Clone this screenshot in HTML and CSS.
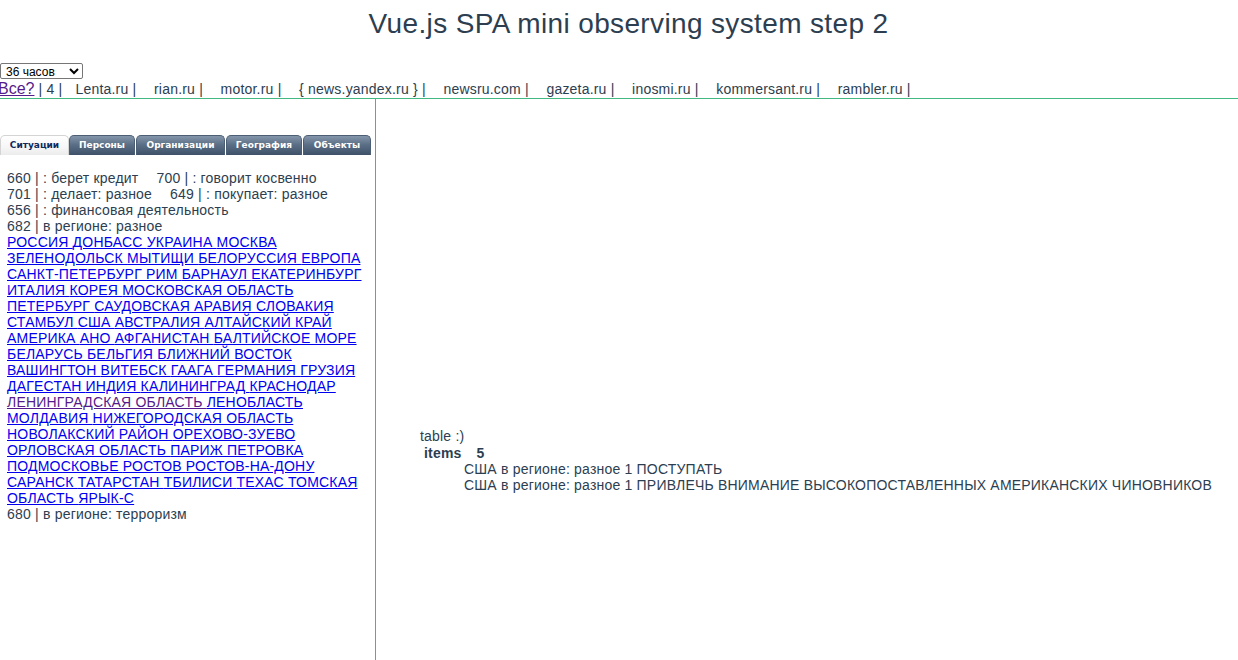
FILE: index.html
```html
<!DOCTYPE html>
<html lang="ru">
<head>
<meta charset="utf-8">
<title>Vue.js SPA mini observing system step 2</title>
<link rel="stylesheet" href="styles.css">
</head>
<body>
<div id="app">
  <h1 class="title">Vue.js SPA mini observing system step 2</h1>
  <div class="period">
    <select class="period-select">
      <option>36 часов</option>
    </select>
  </div>
  <div class="sources">
    <a class="all-link" href="#">Все?</a> | 4 |
    <span class="src">Lenta.ru |</span>
    <span class="src">rian.ru |</span>
    <span class="src">motor.ru |</span>
    <span class="src">{ news.yandex.ru } |</span>
    <span class="src">newsru.com |</span>
    <span class="src">gazeta.ru |</span>
    <span class="src">inosmi.ru |</span>
    <span class="src">kommersant.ru |</span>
    <span class="src">rambler.ru |</span>
  </div>
  <div class="main">
    <div class="side">
      <div class="tabs">
        <div class="tab active">Ситуации</div>
        <div class="tab">Персоны</div>
        <div class="tab">Организации</div>
        <div class="tab">География</div>
        <div class="tab">Объекты</div>
      </div>
      <div class="sits">
        <div class="line"><span class="sit">660 | : берет кредит</span><span class="sit">700 | : говорит косвенно</span></div>
        <div class="line"><span class="sit">701 | : делает: разное</span><span class="sit">649 | : покупает: разное</span></div>
        <div class="line"><span class="sit">656 | : финансовая деятельность</span></div>
        <div class="line"><span class="sit">682 | в регионе: разное</span></div>
        <div class="places"><a href="#">РОССИЯ </a><a href="#">ДОНБАСС </a><a href="#">УКРАИНА </a><a href="#">МОСКВА </a><a href="#">ЗЕЛЕНОДОЛЬСК </a><a href="#">МЫТИЩИ </a><a href="#">БЕЛОРУССИЯ </a><a href="#">ЕВРОПА </a><a href="#">САНКТ-ПЕТЕРБУРГ </a><a href="#">РИМ </a><a href="#">БАРНАУЛ </a><a href="#">ЕКАТЕРИНБУРГ </a><a href="#">ИТАЛИЯ </a><a href="#">КОРЕЯ </a><a href="#">МОСКОВСКАЯ ОБЛАСТЬ </a><a href="#">ПЕТЕРБУРГ </a><a href="#">САУДОВСКАЯ АРАВИЯ </a><a href="#">СЛОВАКИЯ </a><a href="#">СТАМБУЛ </a><a href="#">США </a><a href="#">АВСТРАЛИЯ </a><a href="#">АЛТАЙСКИЙ КРАЙ </a><a href="#">АМЕРИКА </a><a href="#">АНО </a><a href="#">АФГАНИСТАН </a><a href="#">БАЛТИЙСКОЕ МОРЕ </a><a href="#">БЕЛАРУСЬ </a><a href="#">БЕЛЬГИЯ </a><a href="#">БЛИЖНИЙ ВОСТОК </a><a href="#">ВАШИНГТОН </a><a href="#">ВИТЕБСК </a><a href="#">ГААГА </a><a href="#">ГЕРМАНИЯ </a><a href="#">ГРУЗИЯ </a><a href="#">ДАГЕСТАН </a><a href="#">ИНДИЯ </a><a href="#">КАЛИНИНГРАД </a><a href="#">КРАСНОДАР </a><a class="visited" href="#">ЛЕНИНГРАДСКАЯ ОБЛАСТЬ </a><a href="#">ЛЕНОБЛАСТЬ </a><a href="#">МОЛДАВИЯ </a><a href="#">НИЖЕГОРОДСКАЯ ОБЛАСТЬ </a><a href="#">НОВОЛАКСКИЙ РАЙОН </a><a href="#">ОРЕХОВО-ЗУЕВО </a><a href="#">ОРЛОВСКАЯ ОБЛАСТЬ </a><a href="#">ПАРИЖ </a><a href="#">ПЕТРОВКА </a><a href="#">ПОДМОСКОВЬЕ </a><a href="#">РОСТОВ </a><a href="#">РОСТОВ-НА-ДОНУ </a><a href="#">САРАНСК </a><a href="#">ТАТАРСТАН </a><a href="#">ТБИЛИСИ </a><a href="#">ТЕХАС </a><a href="#">ТОМСКАЯ ОБЛАСТЬ </a><a href="#">ЯРЫК-С</a></div>
        <div class="line"><span class="sit">680 | в регионе: терроризм</span></div>
      </div>
    </div>
    <div class="content">
      <div class="caption">table :)</div>
      <div class="head-row"><span class="head-label">items</span><span class="head-count">5</span></div>
      <div class="row">США в регионе: разное 1 ПОСТУПАТЬ</div>
      <div class="row">США в регионе: разное 1 ПРИВЛЕЧЬ ВНИМАНИЕ ВЫСОКОПОСТАВЛЕННЫХ АМЕРИКАНСКИХ ЧИНОВНИКОВ</div>
    </div>
  </div>
</div>
</body>
</html>
```

FILE: styles.css
```css
html, body {
  margin: 0;
  padding: 0;
  background: #fff;
}

#app {
  font-family: "Liberation Sans", Arial, sans-serif;
  font-size: 14px;
  letter-spacing: 0.2px;
  color: #2c3e50;
}

.title {
  margin: 8px 0 23px;
  padding-left: 19px;
  font-size: 28px;
  line-height: 32px;
  letter-spacing: 0.36px;
  font-weight: normal;
  text-align: center;
  color: #2c3e50;
}

.period {
  height: 16px;
}

.period-select {
  display: block;
  width: 83px;
  height: 16px;
  margin: 0;
  padding: 0 0 0 1px;
  font-family: "Liberation Sans", Arial, sans-serif;
  font-size: 12px;
  letter-spacing: 0;
  color: #000;
  background: #fff;
  border: 1px solid #767676;
  border-radius: 2px;
}

.sources {
  height: 19px;
  line-height: 19px;
  margin-top: 0;
  white-space: nowrap;
  border-bottom: 1px solid #42b983;
}

.all-link {
  margin-left: -2px;
  font-size: 16px;
  letter-spacing: 0;
  color: #551a8b;
  text-decoration: underline;
}

.src {
  margin-left: 13.5px;
}

.src:first-of-type {
  margin-left: 9px;
}

.main {
  display: flex;
  min-height: 561px;
}

.side {
  width: 376px;
  flex: none;
  box-sizing: border-box;
  padding: 36px 9px 0 7px;
  border-right: 1px solid #42b983;
}

.tabs {
  display: flex;
  margin-left: -7px;
  height: 20px;
}

.tab {
  flex: none;
  box-sizing: border-box;
  height: 20px;
  line-height: 19px;
  text-align: center;
  font-family: "DejaVu Sans", Verdana, sans-serif;
  font-weight: bold;
  font-size: 9px;
  letter-spacing: 0;
  color: #fff;
  border: 1px solid #4b5e74;
  border-bottom: none;
  border-radius: 5px 5px 0 0;
  background: linear-gradient(#8496aa 0%, #5b6f86 45%, #3e5169 100%);
}

.tab:nth-child(1) { width: 69px; }
.tab:nth-child(2) { width: 66px; }
.tab:nth-child(3) { width: 89px; margin-left: 1px; }
.tab:nth-child(4) { width: 76px; margin-left: 1px; }
.tab:nth-child(5) { width: 68px; margin-left: 1px; }

.tab.active {
  color: #0e2a5e;
  border-color: #d4d4d4;
  background: linear-gradient(#ffffff 0%, #f6f6f6 60%, #ececec 100%);
}

.sits {
  margin-top: 15px;
  line-height: 16px;
}

.sit {
  margin-right: 18px;
}

.places a {
  color: #0000ee;
  text-decoration: underline;
}

.places a.visited {
  color: #551a8b;
}

.content {
  flex: 1;
  padding: 329px 0 0 44px;
  line-height: 16px;
}

.caption {
  line-height: 17px;
}

.head-row {
  padding-left: 4px;
  font-weight: bold;
}

.head-label {
  margin-right: 15px;
}

.row {
  padding-left: 44px;
}
```
